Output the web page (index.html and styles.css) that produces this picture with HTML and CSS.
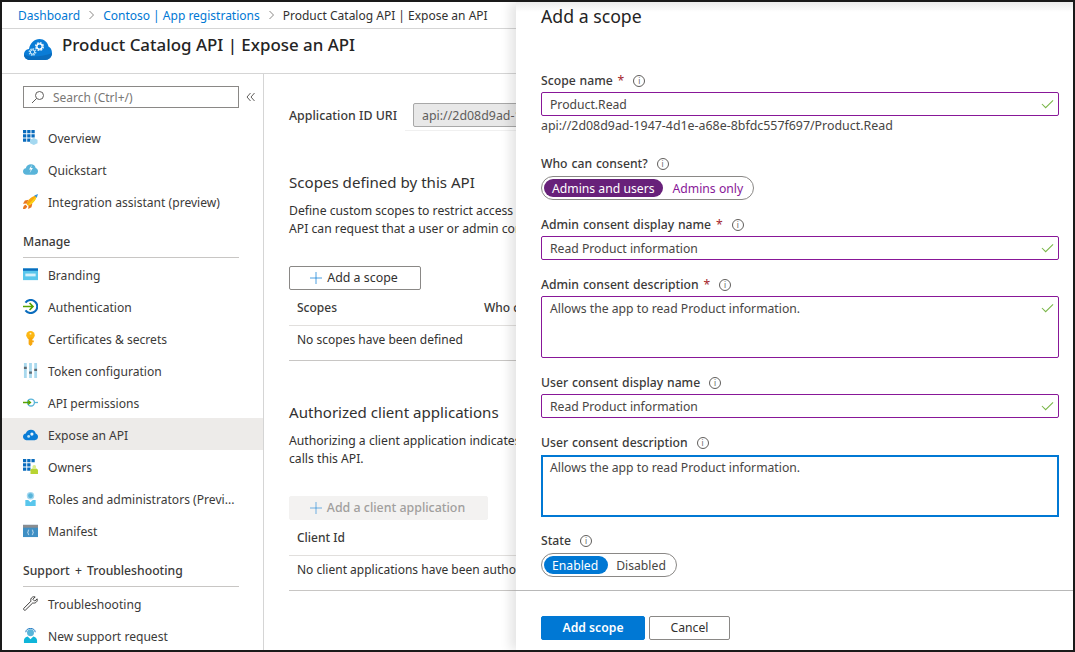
FILE: index.html
```html
<!DOCTYPE html>
<html lang="en">
<head>
<meta charset="utf-8">
<title>Product Catalog API | Expose an API</title>
<link rel="stylesheet" href="styles.css">
</head>
<body>
<div class="frame">
  <nav class="crumbs">
    <a class="link">Dashboard</a>
    <svg class="chev" viewBox="0 0 7 10"><path d="M1.500 1l4 4-4 4" fill="none" stroke="#8a8886"/></svg>
    <a class="link">Contoso | App registrations</a>
    <svg class="chev" viewBox="0 0 7 10"><path d="M1.500 1l4 4-4 4" fill="none" stroke="#8a8886"/></svg>
    <span>Product Catalog API | Expose an API</span>
  </nav>
  <header class="head">
    <svg class="head-icon" viewBox="0 0 28 24">
      <path d="M6 23C2.500 23 0 20.500 0 17.500c0-3 2.200-5.300 5-5.500C6 6 10.500 2 15.500 2c4.600 0 8.200 3.200 9 7.500 1.900.9 3.500 3.200 3.500 6.500 0 4-3 7-7 7z" fill="#0a7cd6"/>
      <path d="M6 23C2.500 23 0 20.500 0 17.500c4 2.500 18 3 28-1.500 0 4-3 7-7 7z" fill="#0a6cbd"/>
      <circle cx="8.500" cy="15" r="3" fill="none" stroke="#a9d9f5" stroke-width="1.800" stroke-dasharray="1.500 .8"/>
      <circle cx="8.500" cy="15" r="2.100" fill="none" stroke="#d5edfa" stroke-width="1"/>
      <circle cx="15.500" cy="9.500" r="3.600" fill="none" stroke="#cfeafa" stroke-width="2" stroke-dasharray="1.800 1"/>
      <circle cx="15.500" cy="9.500" r="2.600" fill="none" stroke="#ffffff" stroke-width="1.200"/>
    </svg>
    <h1 class="title">Product Catalog API | Expose an API</h1>
  </header>
  <div class="blade">
    <aside class="side">
      <div class="search-row">
        <div class="search">
          <svg class="ic-search" viewBox="0 0 14 14"><circle cx="8.500" cy="5.500" r="4" fill="none" stroke="#605e5c"/><path d="M5.500 8.500L1 13" stroke="#605e5c" fill="none"/></svg>
          <span>Search (Ctrl+/)</span>
        </div>
        <svg class="collapse" viewBox="0 0 10 10"><path d="M4.500 1L1 5l3.500 4M8.500 1L5 5l3.500 4" fill="none" stroke="#605e5c"/></svg>
      </div>
      <ul class="nav">
        <li class="item"><svg class="ic" viewBox="0 0 16 16"><path d="M0 0h3.500v3.500H0zM4.500 0H8v3.500H4.500zM9 0h3.500v3.500H9zM0 4.500h3.500V8H0zM4.500 4.500H8V8H4.500zM9 4.500h3.500V8H9zM0 9h3.500v3.500H0zM4.500 9H8v3.500H4.500z" fill="#0a6cbd"/><path d="M11.500 8.500l4 2v3.500l-4 2-4-2v-3.500z" fill="#a4d8f0"/></svg><span class="lbl">Overview</span></li>
        <li class="item"><svg class="ic" viewBox="0 0 16 16"><path d="M4 13.500C1.500 13.500 0 12 0 10s1.300-3.200 3-3.400C3.500 4 6 2.500 8.500 2.500c2.700 0 4.700 1.800 5 4 1.500.4 2.500 1.700 2.500 3.400 0 2-1.500 3.600-3.500 3.600z" fill="#59b4d9"/><path d="M9.500 3L6.500 8h2l-1.500 4 3.500-5.500H8.500z" fill="#fff"/></svg><span class="lbl">Quickstart</span></li>
        <li class="item"><svg class="ic" viewBox="0 0 16 16"><path d="M6 6L2 7 0 10.500l4-.5zM10 10l-1 4-3.500 2 .5-4z" fill="#e8761f"/><path d="M3.500 10.500C5.500 5.500 10 2 15 1c-1 5-4.500 9.500-9.500 11.500z" fill="#f7a70f"/><path d="M6.500 10.500C9 8 11.500 5 15 1c-1 5-4.500 9.500-9.500 11.500z" fill="#fcd116"/><path d="M12 1.600L16 0l-1.300 4z" fill="#3a96dd"/><path d="M0 16c0-2.500 1-4 2.800-4.500l1.700 1.700C4 15 2.500 16 0 16z" fill="#e8761f"/></svg><span class="lbl">Integration assistant (preview)</span></li>
      </ul>
      <h2 class="group">Manage</h2>
      <ul class="nav low">
        <li class="item"><svg class="ic" viewBox="0 0 16 16"><path d="M0 1.500h16v12.500H0z" fill="#59c6ec"/><path d="M0 1.500h16V4H0z" fill="#0a6cbd"/><path d="M2.500 7h11v3h-11z" fill="#d6f1fb"/></svg><span class="lbl">Branding</span></li>
        <li class="item"><svg class="ic" viewBox="0 0 16 16"><path d="M2.600 3.800a7 7 0 1 1 0 8.400" fill="none" stroke="#0a6cbd" stroke-width="2.200"/><path d="M0 8h10.500M7 4.300L10.700 8 7 11.700" fill="none" stroke="#57a300" stroke-width="1.700"/></svg><span class="lbl">Authentication</span></li>
        <li class="item"><svg class="ic" viewBox="0 0 16 16"><circle cx="8" cy="4.500" r="4.500" fill="#fcb714"/><path d="M6 7h4v7l-2 2-2-2zM10 10h1.500v2H10z" fill="#f7a70f"/><circle cx="8" cy="2.800" r="1" fill="#fff3c4"/></svg><span class="lbl">Certificates &amp; secrets</span></li>
        <li class="item"><svg class="ic" viewBox="0 0 16 16"><path d="M1 0h3v16H1zM6.500 0h3v16h-3zM12 0h3v16h-3z" fill="#a9d9ee"/><path d="M1 4h3v2.500H1zM6.500 9h3v2.500h-3zM12 6h3v2.500h-3z" fill="#5e6a72"/></svg><span class="lbl">Token configuration</span></li>
        <li class="item"><svg class="ic" viewBox="0 0 16 16"><circle cx="8.500" cy="8" r="3.700" fill="none" stroke="#59b4d9" stroke-width="1.400"/><path d="M12 8h4" stroke="#59b4d9" stroke-width="1.400"/><path d="M0 8h8M5.500 5.800L8 8l-2.500 2.200" fill="none" stroke="#57a300" stroke-width="1.400"/></svg><span class="lbl">API permissions</span></li>
        <li class="item active"><svg class="ic" viewBox="0 0 16 16"><path d="M3.500 14C1.500 14 0 12.500 0 10.500S1.300 7.300 3 7C3.500 4.500 6 3 8.500 3c2.700 0 4.700 1.700 5 4 1.500.4 2.500 1.700 2.500 3.400 0 2-1.500 3.600-3.500 3.600z" fill="#0a7cd6"/><circle cx="6" cy="10" r="1.500" fill="#bfe3f7"/><circle cx="9.500" cy="7.500" r="1.700" fill="#e8f5fc"/></svg><span class="lbl">Expose an API</span></li>
        <li class="item"><svg class="ic" viewBox="0 0 16 16"><path d="M0 0h3.500v3.500H0zM4.500 0H8v3.500H4.500zM9 0h3.500v3.500H9zM0 4.500h3.500V8H0zM4.500 4.500H8V8H4.500zM0 9h3.500v3.500H0zM4.500 9H8v3.500H4.500z" fill="#0a6cbd"/><path d="M8 16v-4c0-1 1-1.500 2-2h4c1 .5 2 1 2 2v4z" fill="#b8d432"/><circle cx="12" cy="8.500" r="2" fill="#dcec8c"/></svg><span class="lbl">Owners</span></li>
        <li class="item"><svg class="ic" viewBox="0 0 16 16"><circle cx="8" cy="5" r="4" fill="#a4d8f0"/><circle cx="8" cy="5" r="2.600" fill="#59b4d9"/><path d="M2.500 16V9.500h3L8 12l2.500-2.500h3V16z" fill="#59c6ec"/></svg><span class="lbl">Roles and administrators (Previ...</span></li>
        <li class="item"><svg class="ic" viewBox="0 0 16 16"><path d="M0 2h16v13H0z" fill="#3f8fc4"/><path d="M0 2h16v3H0z" fill="#8a8d90"/><path d="M6.500 7.500c-1 0-1 .5-1 1.500s-.5 1-.5 1 .5 0 .5 1 0 1.500 1 1.500M9.500 7.500c1 0 1 .5 1 1.500s.5 1 .5 1-.5 0-.5 1 0 1.500-1 1.500" fill="none" stroke="#fff" stroke-width=".8"/></svg><span class="lbl">Manifest</span></li>
      </ul>
      <h2 class="group g2">Support + Troubleshooting</h2>
      <ul class="nav low">
        <li class="item"><svg class="ic" viewBox="0 0 16 16"><path d="M15 3l-2.500 2.500-2-2L13 1c-2-.7-4.300.5-4.700 2.500-.1.700 0 1.400.2 2L1 13c-.7.7-.3 1.500 0 1.800.4.400 1.200.6 1.800 0L10.400 7.400c2.600.8 5.600-1.300 4.600-4.400z" fill="none" stroke="#323130" stroke-width="1"/></svg><span class="lbl">Troubleshooting</span></li>
        <li class="item"><svg class="ic" viewBox="0 0 16 16"><circle cx="8" cy="5" r="3.700" fill="#59b4d9"/><path d="M3 4.500C3 1.800 5.300.5 8 .5s5 1.300 5 4" fill="none" stroke="#0a6cbd" stroke-width="1"/><path d="M1 16v-3c0-2 2-3.500 4-4l3 3 3-3c2 .5 4 2 4 4v3z" fill="#0fb5d9"/></svg><span class="lbl">New support request</span></li>
      </ul>
    </aside>
    <main class="main">
      <div class="uri-row">
        <span class="uri-label">Application ID URI</span>
        <div class="uri-field"><div class="uri-box">api://2d08d9ad-1947</div></div>
      </div>
      <section class="sec-scopes">
        <h2 class="sec-title">Scopes defined by this API</h2>
        <p class="para">Define custom scopes to restrict access<br>API can request that a user or admin consent</p>
        <button class="cmd" type="button"><svg class="plus" viewBox="0 0 12 12"><path d="M6 0v12M0 6h12" stroke="#0078d4" stroke-opacity=".7"/></svg><span class="cmd-text">Add a scope</span></button>
        <div class="thead"><span class="c1">Scopes</span><span>Who can</span></div>
        <div class="trow">No scopes have been defined</div>
      </section>
      <section class="sec-clients">
        <h2 class="sec-title">Authorized client applications</h2>
        <p class="para">Authorizing a client application indicates<br>calls this API.</p>
        <button class="cmd disabled" type="button"><svg class="plus" viewBox="0 0 12 12"><path d="M6 0v12M0 6h12" stroke="#0078d4" stroke-opacity=".55"/></svg><span class="cmd-text">Add a client application</span></button>
        <div class="thead"><span class="c1">Client Id</span></div>
        <div class="trow">No client applications have been authorized</div>
      </section>
    </main>
  </div>
  <aside class="panel">
    <div class="panel-scroll">
      <h2 class="panel-title">Add a scope</h2>
      <div class="field f-first">
        <label class="label">Scope name <b class="req">*</b><span class="info">i</span></label>
        <div class="input">Product.Read<svg class="check" viewBox="0 0 14 10"><path d="M1 5l4 4 8-8" fill="none" stroke="#7ab648" stroke-width="1.100"/></svg></div>
        <div class="hint">api://2d08d9ad-1947-4d1e-a68e-8bfdc557f697/Product.Read</div>
      </div>
      <div class="field f-who">
        <label class="label">Who can consent?<span class="info">i</span></label>
        <div class="toggle t-who"><span class="on purple">Admins and users</span><span class="off purple-text">Admins only</span></div>
      </div>
      <div class="field f-b">
        <label class="label">Admin consent display name <b class="req">*</b><span class="info">i</span></label>
        <div class="input">Read Product information<svg class="check" viewBox="0 0 14 10"><path d="M1 5l4 4 8-8" fill="none" stroke="#7ab648" stroke-width="1.100"/></svg></div>
      </div>
      <div class="field f-b">
        <label class="label">Admin consent description <b class="req">*</b><span class="info">i</span></label>
        <div class="input area">Allows the app to read Product information.<svg class="check" viewBox="0 0 14 10"><path d="M1 5l4 4 8-8" fill="none" stroke="#7ab648" stroke-width="1.100"/></svg></div>
      </div>
      <div class="field f-b">
        <label class="label">User consent display name<span class="info">i</span></label>
        <div class="input">Read Product information<svg class="check" viewBox="0 0 14 10"><path d="M1 5l4 4 8-8" fill="none" stroke="#7ab648" stroke-width="1.100"/></svg></div>
      </div>
      <div class="field f-b">
        <label class="label">User consent description<span class="info">i</span></label>
        <div class="input area focus">Allows the app to read Product information.</div>
      </div>
      <div class="field f-state">
        <label class="label">State<span class="info">i</span></label>
        <div class="toggle t-state"><span class="on blue">Enabled</span><span class="off tight">Disabled</span></div>
      </div>
    </div>
    <footer class="panel-foot">
      <button class="btn primary" type="button">Add scope</button>
      <button class="btn" type="button">Cancel</button>
    </footer>
  </aside>
</div>
</body>
</html>
```

FILE: styles.css
```css
* { box-sizing: border-box; }
html, body { margin: 0; height: 100%; }
body {
  font-family: "Noto Sans", "Liberation Sans", sans-serif;
  font-size: 12px;
  color: #323130;
  background: #fff;
  overflow: hidden;
}
h1, h2, p, ul { margin: 0; padding: 0; font-weight: 400; }
ul { list-style: none; }
button { font: inherit; }

.frame {
  position: relative;
  width: 1075px;
  height: 652px;
  border: 2px solid #1a1a1a;
  overflow: hidden;
  display: flex;
  flex-direction: column;
  background: #fff;
}

.crumbs {
  height: 27px;
  flex: none;
  display: flex;
  align-items: center;
  gap: 8px;
  padding-left: 16px;
  border-bottom: 1px solid #d5d5d5;
  white-space: nowrap;
}
.link { color: #0078d4; }
.chev { width: 7px; height: 10px; }

.head {
  height: 45px;
  flex: none;
  display: flex;
  align-items: flex-start;
  border-bottom: 1px solid #d5d5d5;
  padding-left: 22px;
}
.head-icon { width: 28px; height: 24px; margin-top: 8px; }
.title { font-size: 16.900px; margin: 4px 0 0 10px; color: #242424; font-weight: 500; line-height: 24px; white-space: nowrap; }

.blade { flex: 1; display: flex; min-height: 0; }

.side {
  width: 262px;
  flex: none;
  border-right: 1px solid #d5d5d5;
  padding-top: 12px;
  overflow: hidden;
}
.search-row { display: flex; align-items: center; padding-left: 21px; margin-bottom: 14px; }
.search {
  width: 216px;
  height: 22px;
  border: 1px solid #8a8886;
  display: flex;
  align-items: center;
  padding-left: 7px;
  color: #797775;
  white-space: nowrap;
}
.ic-search { width: 14px; height: 14px; margin-right: 8px; }
.collapse { width: 10px; height: 10px; margin-left: 7px; }

.item {
  height: 32px;
  display: flex;
  align-items: center;
  padding: 0 26px 0 21px;
  gap: 10px;
  font-size: 12.100px;
}
.low .item { padding-top: 2px; }
.item.active { background: #edebe9; }
.ic { width: 15px; height: 15px; flex: none; margin-top: -2px; }
.lbl { white-space: nowrap; color: #3b3a39; }

.group {
  font-size: 12.200px;
  font-weight: 500;
  word-spacing: 2px;
  height: 25px;
  padding-top: 1px;
  margin: 15px 24px 0 21px;
  border-bottom: 1px solid #c8c6c4;
  line-height: 16px;
  color: #3b3a39;
}
.g2 { margin-top: 16px; }

.main { flex: none; width: 252px; padding-left: 25px; white-space: nowrap; overflow: hidden; }
.uri-row { display: flex; align-items: flex-start; height: 28px; margin-top: 29px; font-size: 12.400px; }
.uri-label { width: 116px; flex: none; line-height: 26px; font-weight: 500; color: #3b3a39; }
.uri-field { width: 400px; flex: none; padding: 0 0 3px 8px; border-bottom: 1px solid #f0f0f0; }
.uri-box {
  height: 24px;
  line-height: 23px;
  padding-left: 8px;
  background: #e8e8e8;
  border: 1px solid #a8a8a8;
  border-radius: 2px;
  color: #605e5c;
}
.sec-scopes { margin-top: 41px; }
.sec-clients { margin-top: 41px; }
.sec-title { font-size: 15.100px; line-height: 20px; color: #323130; }
.para { line-height: 18px; margin-top: 10px; font-size: 12.200px; }
.cmd {
  display: flex;
  align-items: center;
  justify-content: center;
  width: 132px;
  height: 24px;
  margin-top: 28px;
  background: #fff;
  border: 1px solid #8a8886;
  border-radius: 2px;
  padding: 0;
  color: #323130;
  gap: 5px;
  font-size: 12.400px;
}
.cmd-text { margin-top: -2px; }
.cmd.disabled { width: 199px; background: #f3f2f1; border-color: #f3f2f1; color: #a19f9d; font-weight: 500; }
.plus { width: 12px; height: 12px; margin-left: -2px; }
.thead {
  height: 36px;
  display: flex;
  align-items: center;
  padding-left: 8px;
  border-bottom: 1px solid #e1dfdd;
  font-weight: 500;
  color: #3b3a39;
}
.c1 { width: 187px; flex: none; }
.trow { height: 35px; line-height: 27px; padding-left: 8px; border-bottom: 1px solid #c8c6c4; width: 600px; }

.panel {
  position: absolute;
  top: 0;
  right: 0;
  bottom: 0;
  width: 557px;
  background: #fff;
  box-shadow: -6px 0 10px rgba(0, 0, 0, .1);
  display: flex;
  flex-direction: column;
  font-size: 12.200px;
}
.panel-scroll {
  flex: 1;
  padding: 0 14px 0 25px;
  background: linear-gradient(#ececec, #fff 10px);
}
.panel-title { font-size: 17.700px; line-height: 24px; margin-top: 2px; color: #242424; }
.field { display: flex; flex-direction: column; }
.f-first { margin-top: 44px; }
.f-who { margin-top: 21px; }
.f-b { margin-top: 16px; }
.f-state { margin-top: 15px; }
.label { height: 17px; line-height: 17px; margin-bottom: 3px; display: flex; align-items: center; white-space: pre; word-spacing: .7px; color: #3b3a39; font-weight: 500; }
.req { color: #a4262c; font-weight: 400; margin-left: 1px; }
.info {
  width: 12px;
  height: 12px;
  margin-left: 9px;
  border: 1px solid #605e5c;
  border-radius: 50%;
  font-size: 8px;
  line-height: 10px;
  text-align: center;
  color: #605e5c;
  font-weight: 400;
}
.input {
  position: relative;
  height: 24px;
  line-height: 23px;
  border: 1px solid #881798;
  border-radius: 2px;
  padding-left: 8px;
  color: #484644;
}
.input.area { height: 62px; line-height: 24px; }
.input.focus { border: 2px solid #0078d4; padding-left: 7px; line-height: 22px; border-radius: 0; margin-top: 1px; }
.check { position: absolute; top: 6px; right: 4px; width: 13px; height: 10px; }
.hint { height: 18px; padding-top: 1px; line-height: 18px; color: #484644; font-size: 12.400px; }

.toggle {
  display: inline-flex;
  align-self: flex-start;
  height: 24px;
  margin-top: 1px;
  padding: 2px;
  border: 1px solid #8a8886;
  border-radius: 12px;
  align-items: center;
}
.t-who { width: 213px; }
.t-state { width: 136px; }
.on { height: 18px; line-height: 19px; border-radius: 9px; color: #fff; padding: 0 8px; white-space: nowrap; }
.on.blue { padding-right: 10px; }
.off { line-height: 19px; padding-left: 10px; white-space: nowrap; color: #484644; }
.off.tight { padding-left: 8px; }
.purple { background: #68217a; }
.off.purple-text { color: #881798; }
.blue { background: #0078d4; }

.panel-foot {
  flex: none;
  height: 60px;
  border-top: 1px solid #b8b8b8;
  padding: 25px 0 0 25px;
  display: flex;
  gap: 4px;
  align-items: flex-start;
}
.btn {
  height: 24px;
  width: 81px;
  background: #fff;
  border: 1px solid #8a8886;
  border-radius: 2px;
  padding: 0 0 2px;
  color: #323130;
}
.btn.primary { width: 104px; background: #0078d4; border-color: #0078d4; color: #fff; font-weight: 600; }
```
